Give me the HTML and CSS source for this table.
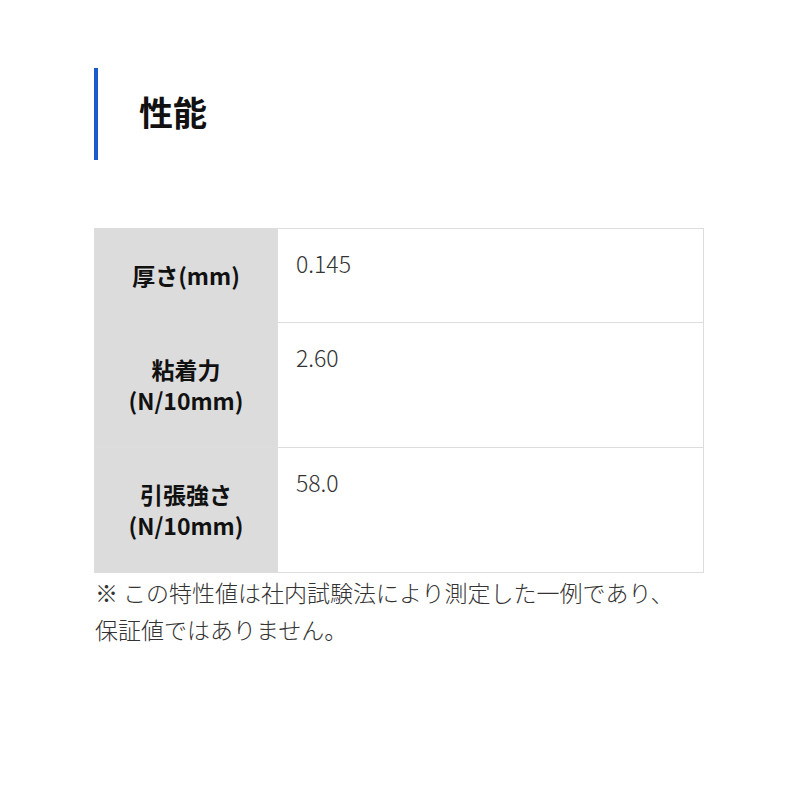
FILE: index.html
```html
<!DOCTYPE html>
<html lang="ja">
<head>
    <meta charset="UTF-8">
    <meta name="viewport" content="width=device-width, initial-scale=1.0">
    <title>性能</title>
    <link rel="stylesheet" href="styles.css">
</head>
<body>
    <section class="spec">
        <h2 class="spec-title">性能</h2>

        <table class="spec-table">
            <tr>
                <th>厚さ(mm)</th>
                <td>0.145</td>
            </tr>
            <tr>
                <th>粘着力<br>(N/10mm)</th>
                <td>2.60</td>
            </tr>
            <tr>
                <th>引張強さ<br>(N/10mm)</th>
                <td>58.0</td>
            </tr>
        </table>

        <p class="spec-note">※ この特性値は社内試験法により測定した一例であり、<br>保証値ではありません。</p>
    </section>
</body>
</html>
```

FILE: styles.css
```css
body {
    font-family: "Noto Sans CJK JP", "Noto Sans", sans-serif;
    background-color: #fff;
    color: #222;
    margin: 0;
}

.spec {
    padding: 68px 96px 0 94px;
}

.spec-title {
    margin: 0;
    border-left: 4px solid #1a5acd;
    padding: 20px 0 24px 41px;
    font-size: 34px;
    line-height: 48px;
    font-weight: 700;
    color: #111;
}

.spec-table {
    width: 610px;
    margin-top: 68px;
    border-collapse: collapse;
    border: 1px solid #ddd;
}

.spec-table th,
.spec-table td {
    border: 1px solid #ddd;
    font-size: 23px;
    line-height: 31px;
}

.spec-table th {
    width: 150px;
    padding: 31px 16px;
    background-color: #dcdcdc;
    font-weight: 700;
    text-align: center;
    vertical-align: middle;
    color: #111;
}

.spec-table td {
    padding: 19px 18px;
    vertical-align: top;
    text-align: left;
    font-weight: 300;
    color: #333;
}

.spec-note {
    margin: 1px 0 0 1px;
    font-size: 23px;
    line-height: 37px;
    font-weight: 300;
    white-space: nowrap;
    color: #333;
}
```
